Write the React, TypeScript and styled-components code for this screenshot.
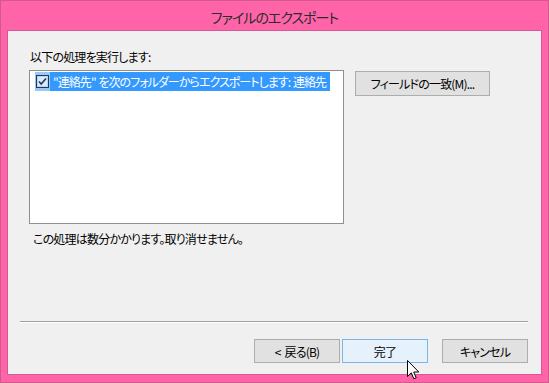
import styled, { createGlobalStyle } from "styled-components";

const GlobalStyle = createGlobalStyle`
  html, body {
    margin: 0;
    padding: 0;
    background: #ffffff;
  }
  body {
    font-family: "Noto Sans CJK JP", "Noto Sans", sans-serif;
    font-size: 12px;
  }
`;

const Window = styled.div`
  position: relative;
  width: 549px;
  height: 383px;
  box-sizing: border-box;
  border: 1px solid #cf5a8e;
  background: #ff64a9;
  display: flex;
  flex-direction: column;
  padding: 0 6px 7px 6px;
  overflow: hidden;
`;

const TitleBar = styled.div`
  height: 29px;
  display: flex;
  align-items: center;
  justify-content: center;
  font-size: 14px;
  letter-spacing: -1px;
  color: #2b2b2b;
  font-feature-settings: "palt";
  padding-top: 2px;
  box-sizing: border-box;
`;

const Client = styled.div`
  flex: 1;
  border: 1px solid #d55894;
  background: #f0f0f0;
  display: flex;
  flex-direction: column;
  font-feature-settings: "palt";
  letter-spacing: -0.8px;
  word-spacing: 2px;
  color: #000;
`;

const Body = styled.div`
  flex: 1;
  padding: 17px 21px 0 21px;
  display: flex;
  flex-direction: column;
`;

const Label = styled.div`
  line-height: 18px;
  height: 18px;
  margin-bottom: 4px;
  padding-left: 1px;
`;

const Row = styled.div`
  display: flex;
  align-items: flex-start;
  gap: 11px;
`;

const ListBox = styled.div`
  width: 315px;
  height: 154px;
  box-sizing: border-box;
  border: 1px solid #8f8f8f;
  background: #ffffff;
  padding: 1px 0 0 5px;
`;

const ListItem = styled.div`
  display: flex;
  height: 19px;
  width: 295px;
`;

const CheckCell = styled.div`
  width: 15px;
  background: #99c9f7;
  display: flex;
  align-items: center;
  justify-content: flex-start;
  padding-left: 1px;
  box-sizing: border-box;
`;

const ItemText = styled.div`
  flex: 1;
  background: #3399ff;
  color: #ffffff;
  line-height: 19px;
  padding-left: 3px;
  white-space: nowrap;
  letter-spacing: -0.95px;
  word-spacing: 1px;
`;

const Button = styled.div<{ $primary?: boolean; $w?: number; $h?: number }>`
  width: ${(p) => p.$w ?? 86}px;
  height: ${(p) => p.$h ?? 24}px;
  box-sizing: border-box;
  border: 1px solid ${(p) => (p.$primary ? "#7eb4ea" : "#adadad")};
  background: ${(p) => (p.$primary ? "#e5f1fb" : "#e1e1e1")};
  display: flex;
  align-items: center;
  justify-content: center;
  white-space: pre;
  color: #000;
`;

const FieldButton = styled(Button)`
  margin-top: 1px;
`;

const Note = styled.div`
  margin-top: 6px;
  line-height: 18px;
  padding-left: 4px;
`;

const Separator = styled.div`
  height: 1px;
  background: #a0a0a0;
  border-bottom: 1px solid #ffffff;
  margin: 0 13px 0 12px;
`;

const Footer = styled.div`
  display: flex;
  justify-content: flex-end;
  align-items: center;
  padding: 16px 13px 11px 0;
  gap: 2px;
`;

const CancelButton = styled(Button)`
  margin-left: 12px;
`;

const Cursor = styled.svg`
  position: absolute;
  left: 406px;
  top: 359px;
`;

const CheckBox = () => (
  <svg width="13" height="13" viewBox="0 0 13 13">
    <rect x="0.5" y="0.5" width="12" height="12" fill="#dcebfb" stroke="#1e395b" />
    <rect x="1.5" y="1.5" width="10" height="10" fill="none" stroke="#b9d4f0" />
    <path d="M3 6.5 L5.2 9 L10 3.5" fill="none" stroke="#1e395b" strokeWidth="1.6" />
  </svg>
);

export default function App() {
  return (
    <>
      <GlobalStyle />
      <Window>
        <TitleBar>ファイルのエクスポート</TitleBar>
        <Client>
          <Body>
            <Label>以下の処理を実行します:</Label>
            <Row>
              <ListBox>
                <ListItem>
                  <CheckCell>
                    <CheckBox />
                  </CheckCell>
                  <ItemText>"連絡先" を次のフォルダーからエクスポートします: 連絡先</ItemText>
                </ListItem>
              </ListBox>
              <FieldButton $w={135} $h={25}>
                フィールドの一致(M)...
              </FieldButton>
            </Row>
            <Note>この処理は数分かかります。取り消せません。</Note>
          </Body>
          <Separator />
          <Footer>
            <Button>&lt; 戻る(B)</Button>
            <Button $primary>完了</Button>
            <CancelButton>キャンセル</CancelButton>
          </Footer>
        </Client>
        <Cursor width="13" height="21" viewBox="0 0 13 21">
          <path
            d="M0.5 0.5 L0.5 16.5 L4.3 12.8 L6.8 18.8 L9.2 17.8 L6.7 12 L11.8 12 Z"
            fill="#ffffff"
            stroke="#000000"
            strokeWidth="1"
            strokeLinejoin="miter"
          />
        </Cursor>
      </Window>
    </>
  );
}
